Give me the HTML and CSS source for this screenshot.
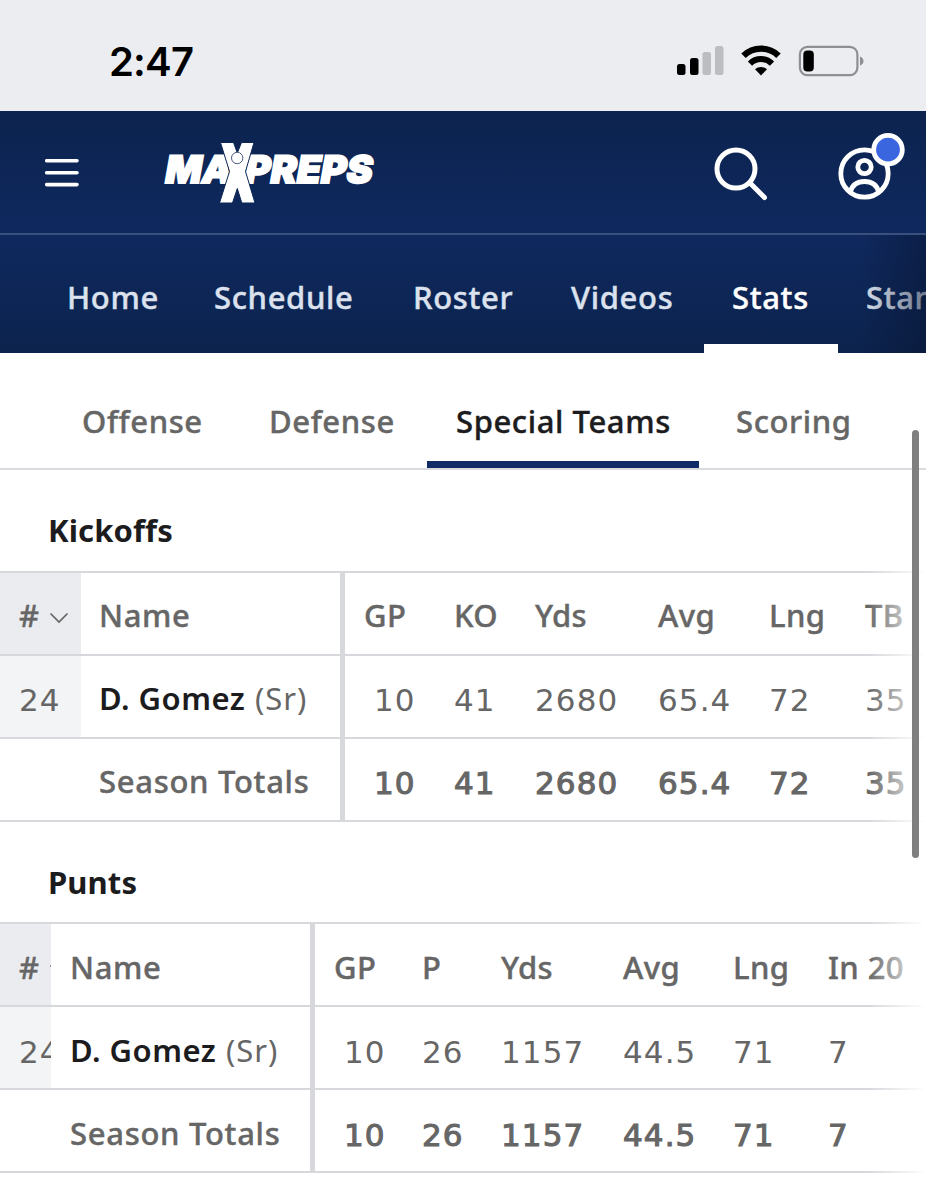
FILE: index.html
```html
<!DOCTYPE html>
<html lang="en">
<head>
  <meta charset="UTF-8">
  <meta name="viewport" content="width=device-width, initial-scale=1">
  <title>MaxPreps - Special Teams Stats</title>
  <link rel="stylesheet" href="styles.css">
</head>
<body>
  <div class="status-bar">
    <span class="time">2:47</span>
    <svg class="status-icons" width="190" height="34" viewBox="0 0 190 34">
      <!-- signal -->
      <rect x="2" y="19" width="8.5" height="11" rx="2.5" />
      <rect x="15" y="13" width="8.5" height="17" rx="2.5" />
      <rect x="27.500" y="7" width="8.500" height="23" rx="2.500" fill="#bcbdc1" />
      <rect x="40" y="1" width="8.500" height="29" rx="2.500" fill="#bcbdc1" />
      <!-- wifi -->
      <path d="M68.500 10.800a25 25 0 0 1 35 0" fill="none" stroke="#000" stroke-width="6.400" />
      <path d="M75 18.600a15.600 15.600 0 0 1 22 0" fill="none" stroke="#000" stroke-width="6" />
      <path d="M80 24.300a8.800 8.800 0 0 1 12 0L86 30.400z" />
      <!-- battery -->
      <rect x="124.900" y="1.900" width="57.500" height="28.200" rx="7.500" fill="none" stroke="#8e8f93" stroke-width="2.200" />
      <rect x="128.300" y="5.500" width="10.500" height="21" rx="4" />
      <path d="M185 11.500q3.500 1.500 3.500 4.500t-3.500 4.500z" fill="#8e8f93" />
    </svg>
  </div>

  <header class="header">
    <svg class="menu-icon" width="34" height="28" viewBox="0 0 34 28">
      <path d="M1.700 1.800H32M1.700 13.800H32M1.700 25.600H32" />
    </svg>
    <svg class="logo" width="230" height="64" viewBox="0 0 230 64">
      <g transform="translate(0 41.500) skewX(-10)" class="logo-text">
        <text x="1.500" y="0" textLength="67" lengthAdjust="spacingAndGlyphs">MA</text>
        <text x="81" y="0" textLength="128" lengthAdjust="spacingAndGlyphs">PREPS</text>
      </g>
      <!-- athlete with arms and legs spread -->
      <path class="logo-figure" d="M58.500 1.500H71.500L75.300 12L79.500 1.500H92L83.500 30.500L93 62H79.800L75.300 47.500L70.500 62H57.500L67.500 30.500Z" />
      <circle class="logo-head" cx="75.200" cy="17" r="5.700" />
    </svg>
    <svg class="search-icon" width="56" height="56" viewBox="0 0 56 56">
      <circle cx="23" cy="23" r="19" />
      <path d="M37 37L51.500 51.500" />
    </svg>
    <svg class="account-icon" width="70" height="70" viewBox="0 0 70 70">
      <circle cx="28.500" cy="42.500" r="23.700" />
      <circle cx="28.500" cy="36" r="6.700" />
      <path d="M14.500 60.500C16.500 53.500 21 50.500 28.500 50.500S40.500 53.500 42.500 60.500" />
      <circle class="account-badge" cx="52" cy="18.700" r="14.300" />
    </svg>
  </header>

  <nav class="main-nav">
    <a class="nav-home">Home</a>
    <a class="nav-schedule">Schedule</a>
    <a class="nav-roster">Roster</a>
    <a class="nav-videos">Videos</a>
    <a class="nav-stats active">Stats</a>
    <a class="nav-standings">Standings</a>
  </nav>

  <nav class="sub-nav">
    <a class="sub-item">Offense</a>
    <a class="sub-item">Defense</a>
    <a class="sub-item active">Special Teams</a>
    <a class="sub-item">Scoring</a>
  </nav>

  <main>
    <section class="stats-section">
      <h2>Kickoffs</h2>
      <div class="table-wrap">
        <table class="kickoffs">
          <colgroup>
            <col class="c-num"><col class="c-name"><col class="c-gp"><col class="c-att"><col class="c-yds"><col class="c-avg"><col class="c-lng"><col class="c-last">
          </colgroup>
          <thead>
            <tr>
              <th class="num"># <svg class="chevron" width="20" height="12" viewBox="0 0 20 12"><path d="M1.500 1.500L10 10L18.500 1.500" /></svg></th>
              <th class="name">Name</th>
              <th>GP</th><th>KO</th><th>Yds</th><th>Avg</th><th>Lng</th><th>TB</th>
            </tr>
          </thead>
          <tbody>
            <tr>
              <td class="num">24</td>
              <td class="name"><b>D. Gomez</b> <span class="grade">(Sr)</span></td>
              <td class="gp">10</td><td>41</td><td>2680</td><td>65.4</td><td>72</td><td>35</td>
            </tr>
            <tr class="totals">
              <td></td>
              <td class="name">Season Totals</td>
              <td class="gp">10</td><td>41</td><td>2680</td><td>65.4</td><td>72</td><td>35</td>
            </tr>
          </tbody>
        </table>
      </div>
    </section>

    <section class="stats-section">
      <h2>Punts</h2>
      <div class="table-wrap">
        <table class="punts">
          <colgroup>
            <col class="c-num"><col class="c-name"><col class="c-gp"><col class="c-att"><col class="c-yds"><col class="c-avg"><col class="c-lng"><col class="c-last">
          </colgroup>
          <thead>
            <tr>
              <th class="num"># <svg class="chevron" width="20" height="12" viewBox="0 0 20 12"><path d="M1.500 1.500L10 10L18.500 1.500" /></svg></th>
              <th class="name">Name</th>
              <th>GP</th><th>P</th><th>Yds</th><th>Avg</th><th>Lng</th><th>In 20</th>
            </tr>
          </thead>
          <tbody>
            <tr>
              <td class="num">24</td>
              <td class="name"><b>D. Gomez</b> <span class="grade">(Sr)</span></td>
              <td class="gp">10</td><td>26</td><td>1157</td><td>44.5</td><td>71</td><td>7</td>
            </tr>
            <tr class="totals">
              <td></td>
              <td class="name">Season Totals</td>
              <td class="gp">10</td><td>26</td><td>1157</td><td>44.5</td><td>71</td><td>7</td>
            </tr>
          </tbody>
        </table>
      </div>
    </section>
  </main>
  <div class="scrollbar"></div>
</body>
</html>
```
FILE: styles.css
```css
* {
  box-sizing: border-box;
}
body {
  margin: 0;
  width: 926px;
  height: 1200px;
  overflow: hidden;
  position: relative;
  background: #fff;
  color: #666;
  font-family: "Noto Sans", "Open Sans", sans-serif;
  font-size: 31px;
  font-weight: 500;
}

/* Phone status bar */
.status-bar {
  display: flex;
  justify-content: space-between;
  height: 111px;
  padding: 38px 61px 0 109px;
  background: #ecedf1;
}
.time {
  font: 600 40px/48px Inter, sans-serif;
  letter-spacing: -0.8px;
  color: #000;
}
.status-icons {
  margin-top: 7px;
}

/* Header */
.header {
  display: flex;
  align-items: flex-start;
  height: 124px;
  padding: 20px 20px 0 45px;
  border-bottom: 2px solid #3a507c;
  background: linear-gradient(#0c234e, #0f295f);
}
.menu-icon {
  margin-top: 28px;
  fill: none;
  stroke: #fff;
  stroke-width: 3.6;
  stroke-linecap: round;
}
.logo {
  margin: 10px 0 0 83px;
}
.logo-text {
  font: 900 38px Inter, sans-serif;
  fill: #fff;
  stroke: #fff;
  stroke-width: 1.8;
}
.logo-figure {
  fill: #fff;
  stroke: #0d2654;
  stroke-width: 1;
}
.logo-head {
  fill: #fff;
  stroke: #4b5c80;
  stroke-width: 1;
}
.search-icon {
  margin: 15px 0 0 auto;
  fill: none;
  stroke: #fff;
  stroke-width: 5;
  stroke-linecap: round;
}
.account-icon {
  margin-left: 67px;
  fill: none;
  stroke: #fff;
  stroke-width: 4.8;
}
.account-icon .account-badge {
  fill: #3a66e0;
}

/* Team navigation */
.main-nav {
  display: flex;
  position: relative;
  height: 118px;
  padding-left: 39px;
  overflow: hidden;
  background: linear-gradient(#0f295f, #0c234d);
}
.main-nav a {
  flex: none;
  padding-left: 28px;
  line-height: 124px;
  color: #dbe2ee;
  letter-spacing: 0.65px;
  -webkit-text-stroke: 0.4px;
}
.main-nav::after {
  content: "";
  position: absolute;
  top: 0;
  right: 0;
  width: 66px;
  height: 100%;
  background: linear-gradient(to right, rgba(8, 20, 48, 0), rgba(8, 20, 48, 0.5));
}
.main-nav .active {
  height: 118px;
  border-bottom: 9px solid #fff;
  color: #fff;
}
.nav-home { width: 147px; }
.nav-schedule { width: 199px; }
.nav-roster { width: 158px; }
.nav-videos { width: 161px; }
.nav-stats { width: 134px; }

/* Stat category tabs */
.sub-nav {
  display: flex;
  height: 117px;
  padding-left: 53px;
  border-bottom: 2px solid #dadbde;
}
.sub-item {
  width: 187px;
  padding-left: 29px;
  line-height: 136px;
  letter-spacing: 0.6px;
  white-space: nowrap;
  -webkit-text-stroke: 0.4px;
}
.sub-item.active {
  width: 272px;
  height: 115px;
  margin-right: 8px;
  border-bottom: 7px solid #112b66;
  color: #1c1c1e;
}

/* Tables */
.stats-section h2 {
  margin: 0;
  padding: 20px 0 0 48px;
  height: 100.5px;
  font-size: 31px;
  line-height: 80px;
  font-weight: 700;
  letter-spacing: 0.1px;
  color: #1c1c1e;
}
.table-wrap {
  position: relative;
  overflow: hidden;
}
.table-wrap::after {
  content: "";
  position: absolute;
  top: 0;
  right: 0;
  width: 58px;
  height: 100%;
  background: linear-gradient(to right, rgba(255, 255, 255, 0), #fff);
}
table {
  width: 976px;
  table-layout: fixed;
  border-collapse: separate;
  border-spacing: 0;
  border-top: 2px solid #d7d8dc;
}
th, td {
  height: 83px;
  padding: 4px 0 0 19px;
  border-bottom: 2px solid #d7d8dc;
  text-align: left;
  font-weight: 500;
  line-height: 40px;
  white-space: nowrap;
}
th {
  letter-spacing: 0.4px;
  -webkit-text-stroke: 0.4px;
}
/* figures are set wider than the labels */
td {
  padding-top: 8px;
  font-family: "DejaVu Sans", sans-serif;
  font-size: 31px;
  font-weight: 400;
  letter-spacing: 1.1px;
}
.num {
  overflow: hidden;
  background: #f3f4f6;
}
th.num {
  background: #ebecf0;
  letter-spacing: 0;
}
.name {
  padding-top: 4px;
  padding-left: 18px;
  border-right: 5px solid #d7d8dc;
  font-family: "Noto Sans", "Open Sans", sans-serif;
  font-size: 31px;
  letter-spacing: 0.6px;
}
.name b {
  font-weight: 600;
  letter-spacing: 0.5px;
  color: #1c1c1e;
}
.grade {
  margin-left: 1px;
  letter-spacing: 1px;
}
.gp {
  padding-left: 29px;
}
.totals td {
  -webkit-text-stroke: 1.1px;
}
.totals .name {
  font-weight: 500;
  letter-spacing: 0.7px;
  -webkit-text-stroke: 0.4px;
}
.chevron {
  margin: 0 0 3px 2px;
  fill: none;
  stroke: #666;
  stroke-width: 1.7;
}

.kickoffs .c-num { width: 81px; }
.kickoffs .c-name { width: 264px; }
.kickoffs .c-gp { width: 90px; }
.kickoffs .c-att { width: 81px; }
.kickoffs .c-yds { width: 123px; }
.kickoffs .c-avg { width: 111px; }
.kickoffs .c-lng { width: 96px; }

.punts .name { padding-left: 19px; }
.punts .c-num { width: 51px; }
.punts .c-name { width: 264px; }
.punts .c-gp { width: 88px; }
.punts .c-att { width: 79px; }
.punts .c-yds { width: 122px; }
.punts .c-avg { width: 110px; }
.punts .c-lng { width: 95px; }

/* Page scroll indicator */
.scrollbar {
  position: absolute;
  top: 430px;
  right: 7px;
  width: 7px;
  height: 428px;
  border-radius: 4px;
  background: #7f7f7f;
}
```
